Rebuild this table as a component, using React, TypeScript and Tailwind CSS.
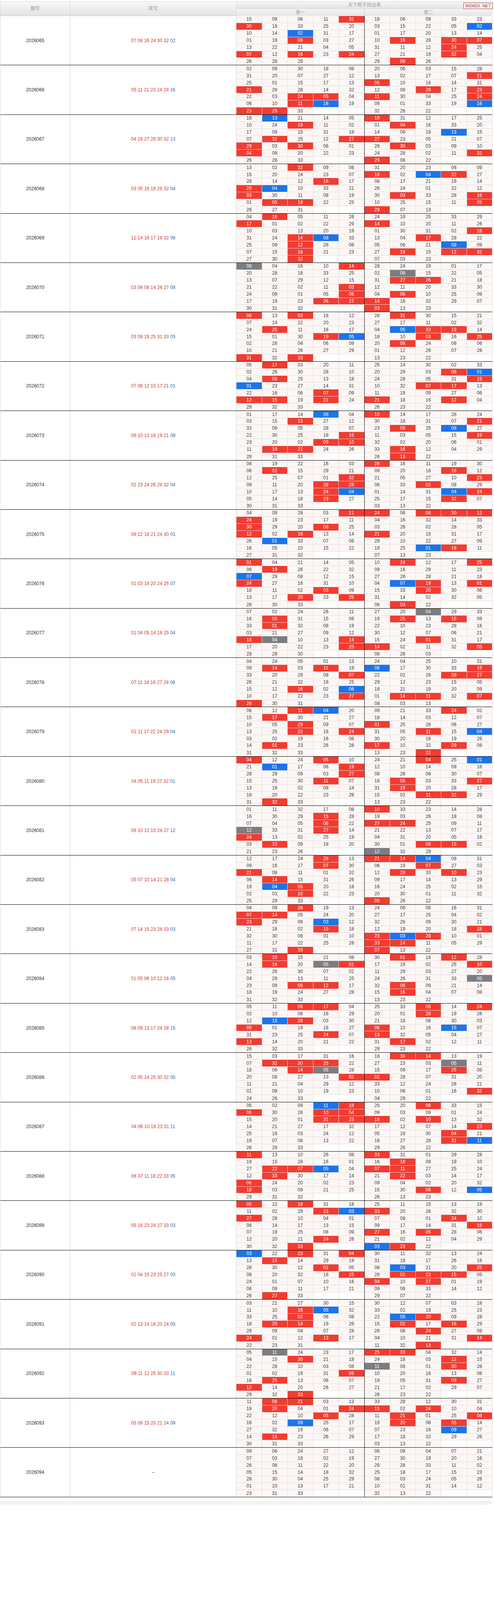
const BLOCKS: [string, string, string, string, string][] = [
  ["2026065", "07 08 16 24 30 32", "02",
    "15 09 06 11 32 30 18 33 25 20 10 14 02 31 17 01 19 08 03 27 13 22 21 04 05 07 12 16 23 24 26 28 29",
    "18 06 09 33 23 03 15 22 05 02 01 17 20 13 14 10 16 28 30 07 31 11 12 24 25 27 21 19 32 04 29 08 26"],
  ["2026066", "05 11 21 23 24 29", "16",
    "02 09 30 18 08 31 20 07 27 12 25 01 15 17 13 21 28 26 14 32 22 03 24 05 04 06 10 11 16 19 23 29 33",
    "20 06 03 15 28 13 02 27 07 21 05 10 18 14 31 12 08 29 17 23 11 30 04 25 24 09 01 33 19 16 32 26 22"],
  ["2026067", "04 19 27 29 30 32", "13",
    "16 13 21 14 05 10 24 19 11 02 17 09 15 31 18 07 32 25 12 27 29 03 30 06 01 04 08 20 22 23 26 28 33",
    "19 31 12 17 25 01 04 16 33 20 14 06 18 13 15 27 23 05 21 07 26 30 03 09 10 24 28 02 11 32 29 08 22"],
  ["2026068", "03 05 16 18 29 32", "04",
    "13 02 32 09 06 15 20 24 23 07 28 14 12 16 17 29 04 10 33 21 03 30 11 08 19 01 05 18 22 25 26 27 31",
    "31 20 23 06 09 18 02 04 32 27 08 17 21 19 14 26 24 01 22 12 30 03 33 28 16 10 25 15 11 05 29 07 13"],
  ["2026069", "12 14 16 17 18 32", "08",
    "04 16 05 11 26 17 01 02 22 29 10 03 13 20 19 31 24 14 08 33 25 09 12 28 06 07 15 18 21 23 27 30 32",
    "24 19 25 33 29 14 10 20 11 26 01 30 31 02 16 13 04 17 28 22 05 06 21 08 09 27 18 15 12 32 07 03 23"],
  ["2026070", "03 06 08 14 26 27", "08",
    "08 04 16 10 14 20 28 18 33 25 13 07 29 12 15 21 22 02 11 03 24 09 01 05 06 17 19 23 26 27 30 31 32",
    "28 24 19 01 17 02 08 15 22 05 31 27 26 21 18 12 11 20 33 30 04 06 10 25 09 14 16 32 29 07 03 13 23"],
  ["2026071", "03 08 19 25 31 33", "05",
    "08 13 03 18 12 07 14 22 20 23 24 25 11 16 17 15 01 30 19 05 02 28 04 06 09 10 21 26 27 29 31 32 33",
    "28 31 30 15 21 27 17 11 02 32 04 05 33 19 14 18 10 03 16 25 20 08 24 09 06 01 12 29 07 26 13 23 22"],
  ["2026072", "07 08 12 15 17 21", "01",
    "05 17 03 20 11 02 26 30 28 10 04 08 25 13 18 01 23 27 14 31 22 16 06 07 09 12 15 19 21 24 29 32 33",
    "25 14 30 02 33 20 29 03 08 01 24 28 05 31 15 10 32 07 17 13 11 19 09 27 06 21 18 16 12 04 26 23 22"],
  ["2026073", "09 10 13 16 19 21", "08",
    "01 17 14 08 04 03 15 13 27 12 32 06 05 28 07 22 30 25 18 16 23 20 02 09 10 11 19 21 24 26 29 31 33",
    "10 14 17 28 24 30 18 31 07 21 23 09 25 08 27 11 03 05 15 19 32 02 20 06 01 33 16 12 04 29 26 13 22"],
  ["2026074", "02 23 24 26 28 32", "04",
    "08 19 22 16 03 06 02 15 29 21 12 25 07 01 32 09 11 20 28 26 10 17 13 24 04 05 14 18 23 27 30 31 33",
    "28 16 11 19 30 09 20 18 26 12 21 05 27 10 23 06 33 02 08 29 01 14 31 04 24 25 17 15 32 07 03 13 22"],
  ["2026075", "08 12 18 21 24 30", "01",
    "04 09 28 03 21 24 19 23 17 11 30 29 20 08 25 12 02 18 13 14 26 01 33 07 06 16 05 10 15 22 27 31 32",
    "24 06 08 30 12 04 16 32 14 33 03 26 02 28 05 21 20 15 31 17 29 10 22 27 09 19 25 01 18 11 07 13 23"],
  ["2026076", "01 03 19 20 24 25", "07",
    "01 04 21 14 05 06 19 26 22 32 07 29 08 12 15 24 27 16 31 10 18 11 02 03 09 13 17 20 23 25 28 30 33",
    "10 24 12 17 25 09 16 29 11 23 27 26 28 21 18 04 07 19 13 01 15 33 20 30 06 31 14 02 32 05 08 03 22"],
  ["2026077", "01 04 05 14 18 25", "04",
    "07 02 24 26 11 16 05 31 15 06 33 01 32 08 19 03 21 27 09 12 18 04 10 13 14 17 20 22 23 25 28 29 30",
    "27 20 04 29 33 19 25 13 18 09 22 10 23 28 16 30 12 07 06 21 15 24 01 31 17 14 02 11 32 05 08 26 03"],
  ["2026078", "07 11 14 16 27 28", "06",
    "04 24 05 01 13 09 14 03 11 19 33 20 29 08 07 26 21 32 18 25 15 12 16 02 06 10 17 22 23 27 28 30 31",
    "24 04 25 10 31 06 17 30 33 16 22 02 26 28 27 29 12 23 15 05 18 21 19 20 09 01 14 11 32 07 08 03 13"],
  ["2026079", "01 11 17 22 24 29", "04",
    "06 12 11 04 20 15 17 30 21 27 10 05 29 09 07 13 25 22 18 24 03 02 19 16 08 14 01 23 26 28 31 32 33",
    "09 21 33 24 02 18 14 03 12 07 01 25 26 06 27 31 05 11 15 04 30 20 16 19 28 17 10 32 29 08 13 23 22"],
  ["2026080", "04 05 11 19 27 32", "01",
    "04 12 24 05 10 21 01 17 06 19 28 29 09 03 27 15 25 30 11 07 13 16 02 08 14 18 20 22 23 26 31 32 33",
    "24 21 04 25 01 12 10 14 09 16 08 26 06 30 07 18 05 03 33 27 31 19 20 28 17 15 02 11 32 29 13 23 22"],
  ["2026081", "06 10 12 15 24 27", "12",
    "01 11 32 17 08 16 30 29 15 28 07 04 05 06 22 12 33 31 27 14 24 13 02 25 19 03 10 09 18 20 21 23 26",
    "10 33 23 14 28 19 03 26 18 08 27 24 25 09 11 21 22 13 07 17 04 31 20 05 16 30 01 06 15 02 12 32 29"],
  ["2026082", "05 07 10 14 21 28", "04",
    "12 17 24 28 13 09 16 27 07 30 21 08 11 01 32 06 14 15 31 26 19 04 05 20 18 02 03 10 22 23 25 29 33",
    "21 14 04 08 31 06 19 07 27 03 12 28 33 10 23 09 17 18 13 29 16 24 25 02 15 20 30 01 11 32 05 26 22"],
  ["2026083", "07 14 15 23 28 33", "03",
    "04 09 28 19 13 07 14 05 24 20 23 29 06 03 12 21 16 02 15 18 32 30 08 01 10 11 17 22 25 26 27 31 33",
    "24 06 08 16 31 27 17 25 04 02 32 26 09 30 21 12 19 20 18 15 23 03 28 10 01 33 14 11 05 29 07 13 22"],
  ["2026084", "01 05 06 10 12 16", "05",
    "03 10 15 21 08 14 16 20 05 01 22 26 30 07 02 04 29 13 11 25 23 09 06 12 17 18 19 24 27 28 31 32 33",
    "30 01 18 12 28 17 19 02 25 10 11 29 03 27 20 24 26 31 33 05 32 06 09 21 14 15 16 04 07 08 13 23 22"],
  ["2026085", "06 09 13 17 24 28", "15",
    "05 11 06 17 04 02 10 08 16 29 12 15 28 03 30 09 01 19 18 27 31 23 25 24 07 13 14 20 21 22 26 32 33",
    "25 33 09 14 24 20 01 28 19 26 21 18 08 30 03 06 10 16 15 07 13 32 05 04 27 31 17 02 12 11 29 23 22"],
  ["2026086", "02 05 14 25 30 32", "05",
    "15 03 17 31 16 07 32 30 25 22 18 06 14 05 28 20 08 27 13 02 11 21 04 29 12 01 09 10 19 23 24 26 33",
    "18 30 14 13 19 27 23 03 05 11 15 09 17 25 08 02 28 07 31 20 33 12 24 26 21 10 06 01 16 32 04 29 22"],
  ["2026087", "04 06 10 18 23 31", "11",
    "05 02 09 11 18 06 30 28 10 04 15 20 01 31 23 14 21 27 17 32 25 16 03 24 12 19 07 08 13 22 26 29 33",
    "25 20 06 33 15 09 03 08 01 24 18 02 10 13 32 17 12 07 14 23 05 19 30 04 21 16 27 28 31 11 29 26 22"],
  ["2026088", "06 07 11 18 22 33", "05",
    "11 13 10 26 08 19 15 28 16 01 27 22 07 05 04 12 33 30 17 14 06 24 20 02 23 18 03 09 21 25 29 31 32",
    "33 31 01 29 28 16 18 08 19 10 07 11 27 25 24 21 22 03 14 17 09 04 02 20 32 15 30 06 12 05 26 13 23"],
  ["2026089", "05 18 23 24 27 33", "03",
    "05 22 18 31 16 11 02 29 23 03 27 28 10 04 01 06 14 17 13 15 07 19 25 08 09 12 20 21 24 26 30 32 33",
    "25 11 15 13 19 33 20 26 32 30 07 08 01 24 10 09 17 14 31 18 27 16 05 28 06 21 02 12 04 29 03 23 22"],
  ["2026090", "02 04 15 23 25 27", "03",
    "03 22 23 31 04 13 15 14 29 19 28 30 12 02 05 08 20 32 18 25 24 01 07 10 16 06 09 11 17 21 26 27 33",
    "30 11 32 13 24 31 18 17 26 16 08 03 21 20 25 28 02 23 15 05 04 10 27 01 19 09 06 33 14 12 29 07 22"],
  ["2026091", "02 13 14 16 20 24", "05",
    "03 21 27 30 15 11 10 16 05 32 33 25 02 06 08 18 20 14 19 26 29 09 04 07 28 24 01 12 13 17 22 23 31",
    "30 12 07 03 18 33 01 19 25 23 22 05 20 09 28 15 02 17 16 29 26 06 24 27 08 04 10 21 31 14 11 32 13"],
  ["2026092", "09 11 12 25 30 33", "11",
    "05 11 24 23 17 04 15 30 21 18 22 28 10 03 08 01 02 19 31 09 16 25 13 06 07 12 14 20 26 27 29 32 33",
    "25 33 04 32 14 24 18 03 12 15 11 08 01 30 28 10 20 16 13 06 19 05 31 09 27 21 17 02 29 07 26 23 22"],
  ["2026093", "05 08 15 20 21 24", "09",
    "11 08 21 03 13 18 20 04 01 24 22 12 10 05 28 16 02 09 25 17 27 32 19 06 07 14 15 23 26 29 30 31 33",
    "33 28 12 30 31 15 02 24 10 04 11 21 01 25 08 19 20 06 05 14 07 23 16 09 27 17 18 32 29 26 03 13 22"],
  ["2026094", "", "",
    "09 06 24 27 12 07 03 16 02 19 26 08 11 22 20 05 15 14 18 32 28 30 04 25 29 01 10 13 17 21 23 31 33",
    "06 09 04 07 21 27 30 19 20 16 29 28 33 11 02 25 18 17 15 23 08 03 24 05 26 10 01 31 14 12 32 13 22"],
];

const split = (s: string) => (s ? s.split(" ") : []);

function tone(n: string, reds: string[], blue: string) {
  const red = reds.includes(n);
  const isBlue = n === blue;
  if (red && isBlue) return "bg-[#7b7d80] text-white";
  if (red) return "bg-[#f33b30] text-white";
  if (isBlue) return "bg-[#1c74ea] text-white";
  return "bg-[#fcf7f5] text-[#3a3a3a]";
}

function Block({ data }: { data: [string, string, string, string, string] }) {
  const [issue, redStr, blue, t1, t2] = data;
  const reds = split(redStr);
  const a = split(t1);
  const b = split(t2);

  const cells = [];
  for (let r = 0; r < 7; r++) {
    for (let c = 0; c < 10; c++) {
      const n = c < 5 ? a[r * 5 + c] : b[r * 5 + c - 5];
      const right = c === 4 ? "border-r-black" : "border-r-[#e2dcdc]";
      const bottom = r === 6 ? "" : "border-b border-b-[#e2dcdc]";
      cells.push(
        <div
          key={`${r}-${c}`}
          className={`flex items-center justify-center border-r text-[12px] leading-none ${right} ${bottom} ${
            n ? tone(n, reds, blue) : "bg-white"
          }`}
        >
          {n}
        </div>
      );
    }
  }

  return (
    <div className="flex h-[126.4px] border-b border-black">
      <div className="flex w-[179px] items-center justify-center border-r border-[#d2d2d2] bg-white text-[12px] text-[#333]">
        {issue}
      </div>
      <div className="flex w-[425px] items-center justify-center border-r border-[#d2d2d2] bg-white text-[12px]">
        {reds.length ? (
          <span>
            <span className="text-[#d3383a]">{reds.join(" ")}</span>{" "}
            <span className="text-[#2a6cc0]">{blue}</span>
          </span>
        ) : (
          <span className="text-[#333]">--</span>
        )}
      </div>
      <div className="grid w-[655px] grid-cols-10 grid-rows-7">{cells}</div>
    </div>
  );
}

export default function App() {
  return (
    <div className="relative min-h-[4193px] w-[1264px] bg-white pt-[3px] font-['Liberation_Sans','Noto_Sans_CJK_SC',sans-serif]">
      <div className="w-[1260px] border-l border-t border-[#d6d6d6]">
        {/* header */}
        <div className="flex h-[37px] border-b border-[#cccccc] text-[12px] text-[#9a9a9a]">
          <div className="flex w-[179px] items-center justify-center border-r border-[#d2d2d2] bg-linear-to-b from-[#f8f8f8] to-[#e3e3e3]">
            期号
          </div>
          <div className="flex w-[425px] items-center justify-center border-r border-[#d2d2d2] bg-linear-to-b from-[#f8f8f8] to-[#e3e3e3]">
            奖号
          </div>
          <div className="flex w-[655px] flex-col">
            <div className="flex h-[19px] items-center justify-center border-b border-[#d6d6d6] bg-linear-to-b from-[#f6f6f6] to-[#e4e4e4]">
              天下帮不同出表
            </div>
            <div className="flex flex-1">
              <div className="flex flex-1 items-center justify-center border-r border-[#c8c8c8] bg-linear-to-b from-[#f4f4f4] to-[#e6e6e6]">
                表一
              </div>
              <div className="flex flex-1 items-center justify-center bg-linear-to-b from-[#f4f4f4] to-[#e6e6e6]">
                表二
              </div>
            </div>
          </div>
        </div>

        {BLOCKS.map((d) => (
          <Block key={d[0]} data={d} />
        ))}
      </div>

      {/* bottom scroll strip */}
      <div className="mt-[9px] flex h-[10px] w-[1259px] items-center justify-end rounded-r-md bg-[#f3f3f3] pr-[2px]">
        <div className="h-[8px] w-[26px] rounded-full bg-[#eef1f5]" />
      </div>

      {/* site badge */}
      <div className="absolute left-[1186px] top-[7px] flex h-[16px] w-[75px] items-center justify-center border border-[#9b2c2c] bg-white text-[11px] text-[#8e1f1f]">
        800820. NET
      </div>
    </div>
  );
}
